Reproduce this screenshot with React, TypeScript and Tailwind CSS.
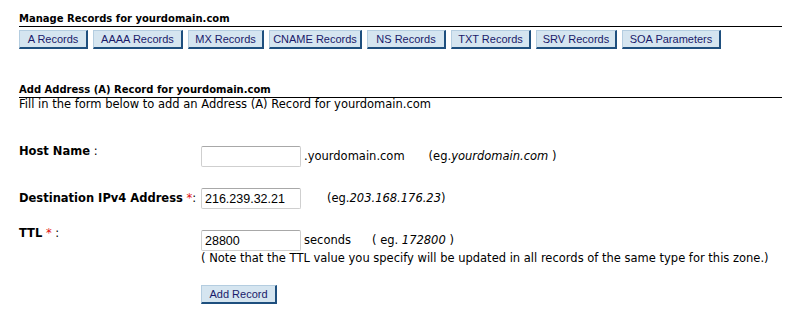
import React from 'react';

const tabs = [
  { label: 'A Records', w: 'w-[69px]' },
  { label: 'AAAA Records', w: 'w-[90px]' },
  { label: 'MX Records', w: 'w-[76px]' },
  { label: 'CNAME Records', w: 'w-[93px]' },
  { label: 'NS Records', w: 'w-[79px]' },
  { label: 'TXT Records', w: 'w-[80px]' },
  { label: 'SRV Records', w: 'w-[81px]' },
  { label: 'SOA Parameters', w: 'w-[99px]' },
];

const btn =
  "h-[19px] shrink-0 whitespace-nowrap bg-[#d5e5f0] border border-t-[#b4cde0] border-l-[#b4cde0] border-r-[#1e4f7e] border-b-[#1e4f7e] border-r-2 border-b-2 text-[#1a1a6a] text-[11px] leading-[15px] font-['Liberation_Sans',sans-serif]";

const inputCls =
  "w-[100px] h-[21px] px-[3px] border border-[#cfcfcf] border-t-[#a8a8a8] rounded-[2px] bg-white text-[12.5px] text-black font-['Liberation_Sans',sans-serif] outline-none";

const Req = () => <span className="text-[#e01010] font-normal">*</span>;

const App = () => {
  return (
    <div className="w-[803px] h-[318px] bg-white text-black font-['DejaVu_Sans',Verdana,sans-serif] text-[11.5px] pl-[19px] pr-[21px] overflow-hidden">
      {/* Manage records */}
      <div className="pt-[13px]">
        <h2 className="text-[10px] font-bold leading-[12px] pb-[1px] border-b border-black">
          Manage Records for yourdomain.com
        </h2>
        <div className="flex gap-[5px] mt-[3px]">
          {tabs.map(t => (
            <button key={t.label} type="button" className={`${btn} ${t.w}`}>
              {t.label}
            </button>
          ))}
        </div>
      </div>

      {/* Add record */}
      <div className="mt-[35px]">
        <h2 className="text-[10px] font-bold leading-[12px] pb-[1px] border-b border-black">
          Add Address (A) Record for yourdomain.com
        </h2>
        <p className="leading-[13px]">Fill in the form below to add an Address (A) Record for yourdomain.com</p>
      </div>

      <div className="grid grid-cols-[182px_1fr] gap-y-[21px] mt-[35px]">
        <div className="leading-[14px] -mt-[2px]">
          <span className="font-bold">Host Name</span> :
        </div>
        <div className="flex items-center">
          <input type="text" className={inputCls} defaultValue="" />
          <span className="ml-[3px]">.yourdomain.com</span>
          <span className="ml-[24px]">
            (eg.<i>yourdomain.com</i> )
          </span>
        </div>

        <div className="flex items-center">
          <span className="font-bold">Destination IPv4 Address</span>&nbsp;<Req />:
        </div>
        <div className="flex items-center">
          <input type="text" className={inputCls} defaultValue="216.239.32.21" />
          <span className="ml-[26px]">
            (eg.<i>203.168.176.23</i>)
          </span>
        </div>

        <div className="leading-[14px] -mt-[4px]">
          <span className="font-bold">TTL</span> <Req /> :
        </div>
        <div>
          <div className="flex items-center">
            <input type="text" className={inputCls} defaultValue="28800" />
            <span className="ml-[3px]">seconds</span>
            <span className="ml-[21px]">
              ( eg. <i>172800</i> )
            </span>
          </div>
          <div className="leading-[14px]">
            ( Note that the TTL value you specify will be updated in all records of the same type for this zone.)
          </div>
          <button type="button" className={`${btn} w-[76px] mt-[20px]`}>
            Add Record
          </button>
        </div>
      </div>
    </div>
  );
};

export default App;
